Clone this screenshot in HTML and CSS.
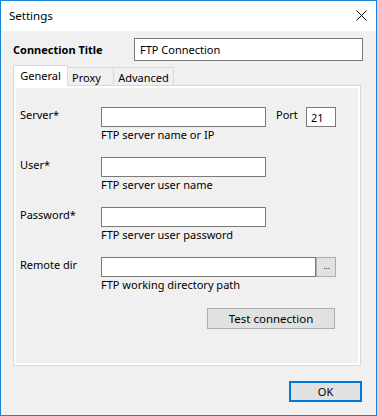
FILE: index.html
```html
<!DOCTYPE html>
<html>
<head>
<meta charset="utf-8">
<link rel="stylesheet" href="styles.css">
</head>
<body>
<div class="window">
  <div class="titlebar">
    <span class="title">Settings</span>
    <svg class="close" width="11" height="11" viewBox="0 0 11 11"><path d="M0.5 0.5 L10.5 10.5 M10.5 0.5 L0.5 10.5" stroke="#000" stroke-width="1" fill="none"/></svg>
  </div>
  <div class="content">
    <div class="conn-row">
      <div class="conn-label">Connection Title</div>
      <div class="textbox conn-input">FTP Connection</div>
    </div>
    <div class="tabs">
      <div class="tab tab-general active">General</div>
      <div class="tab tab-proxy">Proxy</div>
      <div class="tab tab-advanced">Advanced</div>
    </div>
    <div class="panel">
      <div class="panel-inner">
        <div class="field">
          <div class="label">Server*</div>
          <div class="control">
            <div class="line">
              <div class="textbox input-server"></div>
              <span class="port-label">Port</span>
              <div class="textbox input-port">21</div>
            </div>
            <div class="hint">FTP server name or IP</div>
          </div>
        </div>
        <div class="field">
          <div class="label">User*</div>
          <div class="control">
            <div class="line"><div class="textbox input-server"></div></div>
            <div class="hint">FTP server user name</div>
          </div>
        </div>
        <div class="field">
          <div class="label">Password*</div>
          <div class="control">
            <div class="line"><div class="textbox input-server"></div></div>
            <div class="hint">FTP server user password</div>
          </div>
        </div>
        <div class="field">
          <div class="label">Remote dir</div>
          <div class="control">
            <div class="line">
              <div class="textbox input-dir"></div>
              <div class="browse">. . .</div>
            </div>
            <div class="hint">FTP working directory path</div>
          </div>
        </div>
        <div class="actions">
          <div class="button test-btn">Test connection</div>
        </div>
      </div>
    </div>
    <div class="footer">
      <div class="button ok-btn">OK</div>
    </div>
  </div>
</div>
</body>
</html>
```

FILE: styles.css
```css
* { box-sizing: border-box; }
html, body { margin: 0; padding: 0; }
body {
  font-family: "Noto Sans", "Open Sans", sans-serif;
  font-size: 11px;
  line-height: 15px;
  color: #000;
  background: #fff;
}
.window {
  width: 377px;
  height: 416px;
  border: 1px solid #1883d7;
  display: flex;
  flex-direction: column;
  background: #f0f0f0;
}
.titlebar {
  height: 30px;
  background: #fff;
  display: flex;
  align-items: center;
  justify-content: space-between;
  padding-left: 8px;
  padding-right: 9px;
  flex-shrink: 0;
}
.title { line-height: 30px; font-size: 11.5px; }
.close { display: block; margin-top: -1px; }
.content {
  flex: 1;
  background: #f0f0f0;
  padding: 7px 0 0 12px;
}
.conn-row {
  display: flex;
  align-items: center;
  height: 23px;
}
.conn-label {
  width: 121px;
  font-weight: bold;
}
.textbox {
  background: #fff;
  border: 1px solid #7a7a7a;
  height: 20px;
}
.conn-input {
  width: 229px;
  height: 23px;
  padding: 3px 0 0 5px;
}
.tabs {
  display: flex;
  align-items: flex-end;
  height: 20px;
  margin-top: 4px;
  position: relative;
  z-index: 1;
}
.tab {
  border: 1px solid #d9d9d9;
  border-bottom: none;
  height: 18px;
  background: #f0f0f0;
  text-align: center;
  padding-top: 2px;
  margin-left: -1px;
}
.tab-general { width: 55px; margin-left: 0; }
.tab-proxy { width: 47px; padding-right: 8px; }
.tab-advanced { width: 61px; }
.tab.active {
  height: 21px;
  background: #fff;
  margin-bottom: -1px;
  position: relative;
  z-index: 2;
}
.panel {
  width: 348px;
  height: 281px;
  border: 1px solid #d9d9d9;
  background: #fff;
  padding: 2px;
}
.panel-inner {
  height: 100%;
  background: #f0f0f0;
  padding: 19px 0 0 4px;
}
.field {
  display: grid;
  grid-template-columns: 81px 235px;
  height: 50px;
}
.line {
  display: flex;
  align-items: flex-start;
  height: 20px;
}
.input-server { width: 165px; }
.port-label { margin-left: 10px; }
.input-port {
  width: 30px;
  margin-left: auto;
  padding: 2px 0 0 4px;
  line-height: 15px;
}
.input-dir { width: 215px; }
.browse {
  width: 20px;
  height: 20px;
  border: 1px solid #adadad;
  background: #e1e1e1;
  font-size: 8px;
  line-height: 16px;
  text-align: center;
  letter-spacing: -1px;
  white-space: nowrap;
}
.actions {
  display: flex;
  justify-content: flex-end;
  width: 315px;
  margin-top: 1px;
}
.button {
  background: #e1e1e1;
  border: 1px solid #adadad;
  text-align: center;
}
.test-btn {
  width: 128px;
  height: 21px;
  line-height: 19px;
  font-size: 11.5px;
}
.footer {
  display: flex;
  justify-content: flex-end;
  padding-right: 14px;
  margin-top: 15px;
}
.ok-btn {
  width: 73px;
  height: 21px;
  border: 2px solid #0078d7;
  line-height: 17px;
}
```
